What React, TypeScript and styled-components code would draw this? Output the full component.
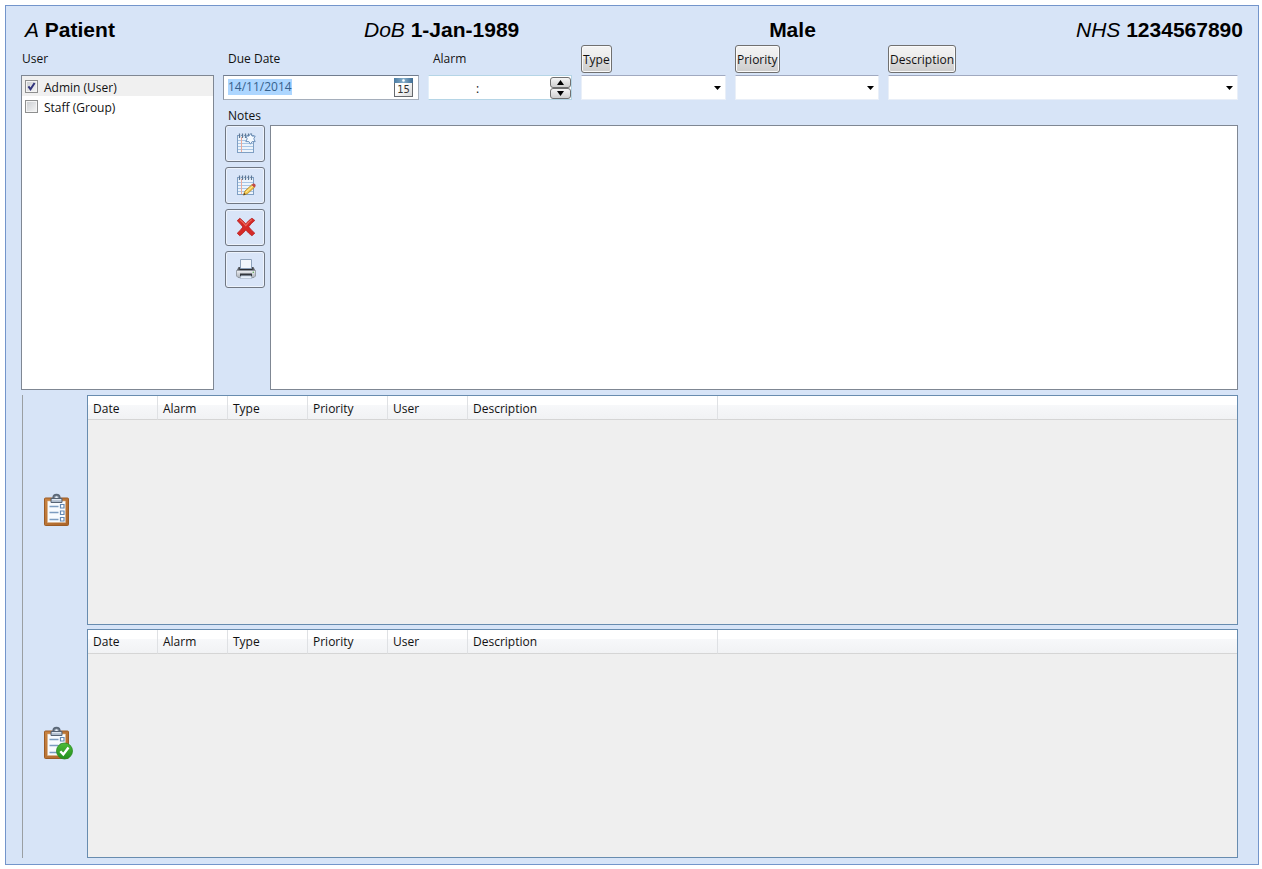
import React, { useEffect, useRef, useState } from "react";
import styled, { createGlobalStyle } from "styled-components";

const GlobalStyle = createGlobalStyle`
  *, *::before, *::after { box-sizing: border-box; }
  body {
    margin: 0;
    background: #fff;
    color: #111;
    font-family: "Open Sans", "Noto Sans", sans-serif;
    font-size: 12px;
    line-height: 16px;
  }
  button, input, select, textarea { font: inherit; color: inherit; margin: 0; }
`;

const Page = styled.div`
  display: flex;
  min-height: 100vh;
  padding: 5px 3px 4px 5px;
`;

const Frame = styled.main`
  flex: 1;
  min-width: 0;
  display: flex;
  flex-direction: column;
  padding: 0 20px 6px 15px;
  background: #d7e4f7;
  border: 1px solid #7395cb;
`;

const PatientBar = styled.header`
  display: grid;
  grid-template-columns: 338fr 404fr 306fr auto;
  margin-right: -5px;
  padding: 11px 0 2px 4px;
  font-family: "Liberation Sans", Arial, sans-serif;
  font-size: 21px;
  line-height: 26px;
  color: #000;
  white-space: nowrap;
`;

const Editor = styled.form`
  display: grid;
  grid-template-columns: 193px minmax(0, 1fr);
  gap: 9px;
`;

const UserPanel = styled.section`
  display: flex;
  flex-direction: column;
  gap: 2px;
`;

const CaptionRow = styled.div<{ $indent?: number }>`
  display: flex;
  align-items: center;
  height: 28px;
  padding-left: ${(p) => p.$indent ?? 0}px;
`;

const UserList = styled.ul`
  flex: 1;
  margin: 0;
  padding: 0;
  list-style: none;
  background: #fff;
  border: 1px solid #7f8793;
`;

const UserRow = styled.li<{ $selected?: boolean }>`
  height: 20px;
  background: ${(p) => (p.$selected ? "#f0f0f0" : "transparent")};

  label {
    display: flex;
    align-items: flex-start;
    gap: 6px;
    padding: 4px 0 0 3px;
  }
`;

const TickWrap = styled.span`
  position: relative;
  width: 13px;
  height: 13px;

  svg {
    position: absolute;
    inset: 0;
    pointer-events: none;
  }
`;

const Tick = styled.input`
  appearance: none;
  display: block;
  width: 13px;
  height: 13px;
  border: 1px solid #8e8f8f;
  background: linear-gradient(135deg, #c9ccd0, #f6f6f6);
  box-shadow: inset 0 0 0 1px #f4f4f4;
`;

const DetailPanel = styled.section`
  display: flex;
  flex-direction: column;
  min-width: 0;
`;

const FieldRow = styled.div`
  display: grid;
  grid-template-columns: 196px 144px 145px 144px minmax(0, 1fr);
  column-gap: 9px;
`;

const Field = styled.div`
  display: flex;
  flex-direction: column;
  gap: 2px;
  min-width: 0;
`;

const CaptionButton = styled.button`
  height: 28px;
  padding: 2px 1px 0;
  border: 1px solid #707070;
  border-radius: 3px;
  background: linear-gradient(#f3f3f3 0%, #ebebeb 50%, #dddddd 51%, #cdcdcd 100%);
  box-shadow: inset 0 0 0 1px #fafafa;
`;

const DateBox = styled.div`
  display: flex;
  align-items: center;
  height: 25px;
  padding: 0 5px 0 4px;
  background: #fff;
  border: 1px solid #a5aebb;
  border-top-color: #717d8f;
  border-left-color: #8a94a3;
`;

const DateInput = styled.input`
  flex: 1;
  min-width: 0;
  height: 16px;
  margin-bottom: 2px;
  padding: 0;
  border: 0;
  outline: 0;
  background: transparent;
  color: #36618c;

  &::selection { background: #add6ff; color: #36618c; }
`;

const BareButton = styled.button`
  display: block;
  padding: 0;
  border: 0;
  background: none;

  svg { display: block; }
`;

const TimeBox = styled.div`
  display: flex;
  align-items: center;
  height: 25px;
  background: #fff;
  border: 1px solid #b5d5e6;
  border-left-color: #e2effa;
`;

const TimeInput = styled.input`
  flex: 1;
  min-width: 0;
  height: 20px;
  padding: 2px 24px 0 0;
  border: 0;
  outline: 0;
  background: transparent;
  text-align: center;
`;

const Spinner = styled.div`
  display: flex;
  flex-direction: column;
`;

const SpinButton = styled.button`
  display: flex;
  align-items: center;
  justify-content: center;
  width: 21px;
  height: 11px;
  padding: 0;
  border: 1px solid #707070;
  border-radius: 3px;
  background: linear-gradient(#f6f6f6, #cfcfcf);
`;

const ComboBox = styled.div`
  position: relative;
  height: 25px;

  svg {
    position: absolute;
    right: 5px;
    top: 11px;
    pointer-events: none;
  }
`;

const Combo = styled.select`
  appearance: none;
  display: block;
  width: 100%;
  height: 25px;
  padding: 0 20px 0 4px;
  border: 1px solid #e9eff8;
  border-top-color: #a0a9c0;
  border-radius: 0;
  background: #fff;
`;

const NotesLabel = styled.label`
  margin: 8px 0 1px 5px;
`;

const NotesRow = styled.div`
  display: flex;
  gap: 5px;
  padding-left: 2px;
`;

const ToolColumn = styled.div`
  display: flex;
  flex-direction: column;
  gap: 5px;
`;

const ToolButton = styled.button`
  display: flex;
  align-items: center;
  justify-content: center;
  width: 40px;
  height: 37px;
  padding: 0 0 2px 2px;
  border: 1px solid #707782;
  border-radius: 3px;
  background: #d9e5f8;
  box-shadow: inset 0 0 0 1px #edf3fc;
`;

const NotesBox = styled.textarea`
  flex: 1;
  min-width: 0;
  height: 265px;
  padding: 4px;
  resize: none;
  outline: 0;
  border: 1px solid #7f8793;
  border-radius: 0;
  background: #fff;
`;

const TaskArea = styled.section`
  flex: 1;
  display: flex;
  flex-direction: column;
  gap: 4px;
  margin: 5px 0 0 1px;
  border-left: 1px solid #9a9fa3;
`;

const TaskGroup = styled.div`
  flex: 1;
  display: grid;
  grid-template-columns: 64px minmax(0, 1fr);
  min-height: 120px;
`;

const SideIcon = styled.div`
  display: flex;
  align-items: center;
  justify-content: center;
  padding-left: 4px;
`;

const GridPanel = styled.div`
  background: #efefef;
  border: 1px solid #688caf;
`;

const GridTable = styled.table`
  width: 100%;
  table-layout: fixed;
  border-collapse: separate;
  border-spacing: 0;
`;

const HeadCell = styled.th<{ $width?: number }>`
  width: ${(p) => (p.$width ? `${p.$width}px` : "auto")};
  height: 24px;
  padding: 2px 5px 0;
  text-align: left;
  font-weight: 400;
  background: linear-gradient(#ffffff 0%, #ffffff 40%, #f7f8fa 41%, #f1f2f4 100%);
  border-bottom: 1px solid #d5d5d5;
  border-right: ${(p) => (p.$width ? "1px solid #dfe1e4" : "0")};
`;

const CheckMark = () => (
  <svg width="13" height="13" viewBox="0 0 13 13">
    <path d="M3.4 6.4 L5.5 9.3 L9.6 3" fill="none" stroke="#31347c" strokeWidth="2" />
  </svg>
);

const DownArrow = () => (
  <svg width="7" height="4" viewBox="0 0 7 4">
    <path d="M0 0H7L3.5 4Z" fill="#000" />
  </svg>
);

const SpinArrow = ({ up }: { up?: boolean }) => (
  <svg width="7" height="5" viewBox="0 0 7 5">
    <path d={up ? "M0 5H7L3.5 0Z" : "M0 0H7L3.5 5Z"} fill="#000" />
  </svg>
);

const CalendarIcon = () => (
  <svg width="19" height="19" viewBox="0 0 19 19">
    <defs>
      <linearGradient id="calTop" x1="0" x2="1">
        <stop offset="0" stopColor="#4c7ba1" />
        <stop offset="0.5" stopColor="#83adca" />
        <stop offset="1" stopColor="#3f6c93" />
      </linearGradient>
      <linearGradient id="calPage" x1="0" x2="1" y1="0" y2="1">
        <stop offset="0.4" stopColor="#fff" />
        <stop offset="1" stopColor="#d8d8d8" />
      </linearGradient>
    </defs>
    <rect x="0.5" y="0.5" width="18" height="18" fill="url(#calPage)" stroke="#66696d" />
    <rect x="0" y="0" width="19" height="5" fill="url(#calTop)" />
    <circle cx="9.5" cy="2.5" r="1.3" fill="#fff" />
    <text x="9.5" y="15" textAnchor="middle" fontFamily="DejaVu Sans" fontSize="10" fill="#333">15</text>
  </svg>
);

const NotePad = () => (
  <>
    <rect x="2.5" y="3.5" width="16" height="17" fill="#edf4fc" stroke="#7f9fc3" />
    <path d="M3 8.5H18M3 11.5H18M3 14.5H18M3 17.5H18" stroke="#a9c5e4" />
    <path d="M6.5 5V20" stroke="#e9a99a" />
    <path d="M4.5 1.5V6M7.5 1.5V6M10.5 1.5V6M13.5 1.5V6M16.5 1.5V6" stroke="#5f7896" strokeWidth="1.2" />
    <path d="M5.5 2.5V5M8.5 2.5V5M11.5 2.5V5M14.5 2.5V5" stroke="#c3d0df" />
  </>
);

const NewNoteIcon = () => (
  <svg width="22" height="22" viewBox="0 0 22 22">
    <NotePad />
    <path
      d="M15.5 1.6 L17.1 4.1 L20.2 4 L18.8 6.8 L20.2 9.6 L17.1 9.6 L15.5 12.2 L13.9 9.6 L10.8 9.6 L12.2 6.8 L10.8 4 L13.9 4.1Z"
      fill="#f4f9ff"
      stroke="#6f92bb"
    />
  </svg>
);

const EditNoteIcon = () => (
  <svg width="22" height="22" viewBox="0 0 22 22">
    <NotePad />
    <path d="M8.5 21 L9.8 17.2 L17.2 10.4 L19.8 13 L12.3 19.8Z" fill="#f4c84b" stroke="#b08428" strokeWidth="0.8" />
    <path d="M10.7 18.4 L18.4 11.6" stroke="#fff0a8" strokeWidth="1" />
    <path d="M16.6 11 L18.1 9.6 Q19 9 20 10 T20.4 12.2 L19.2 13.6Z" fill="#c04a48" />
    <path d="M8.3 21.2 L9.2 18.8 L10.7 20.4Z" fill="#584329" />
  </svg>
);

const DeleteIcon = () => (
  <svg width="22" height="22" viewBox="0 0 20 20">
    <path
      d="M2 4.3 L4.4 2 Q7 4 9.8 7.2 Q12.6 3.6 15.4 2 L18 4 Q14.8 6.5 12.4 9.8 Q15 13.2 18 15.6 L15.4 18 Q12.5 16 9.8 12.7 Q7.2 16.2 4.4 18 L2 15.7 Q5 13.2 7.2 10 Q4.8 6.8 2 4.3Z"
      fill="#d62a27"
      stroke="#b51c1f"
      strokeWidth="0.7"
    />
    <path d="M4.4 3.4 Q7.4 5.6 9.8 8.8 Q12.4 5.2 15.4 3.3" fill="none" stroke="#ea6a5c" />
  </svg>
);

const PrinterIcon = () => (
  <svg width="20" height="20" viewBox="0 0 20 20">
    <defs>
      <linearGradient id="printerBody" x1="0" x2="0" y1="0" y2="1">
        <stop offset="0" stopColor="#f0f2f5" />
        <stop offset="1" stopColor="#a9afb7" />
      </linearGradient>
    </defs>
    <path d="M2.5 8H17.5L19.5 12H0.5Z" fill="#5c6067" />
    <path d="M3.5 8.5H16.5V11H3.5Z" fill="#2a2d33" />
    <path d="M4.5 0.5H15.5V9.5H4.5Z" fill="#f2f7fd" stroke="#8ea2bb" />
    <path d="M0.5 11.5H19.5V17L18 18.5H2L0.5 17Z" fill="url(#printerBody)" stroke="#8a9097" strokeWidth="0.8" />
    <path d="M4 14.5H16V17.5H4Z" fill="#33373d" />
    <path d="M5 16.8H15L16 19.6H4Z" fill="#e7f0fa" stroke="#9cacbf" strokeWidth="0.6" />
    <circle cx="17.3" cy="13.3" r="0.8" fill="#5faa55" />
  </svg>
);

const ClipboardIcon = ({ done }: { done?: boolean }) => (
  <svg width="32" height="36" viewBox="0 0 32 36">
    <defs>
      <linearGradient id="board" x1="0" x2="1" y1="0" y2="1">
        <stop offset="0" stopColor="#c98342" />
        <stop offset="1" stopColor="#aa6429" />
      </linearGradient>
      <linearGradient id="okDisc" x1="0" x2="0" y1="0" y2="1">
        <stop offset="0" stopColor="#4dbb39" />
        <stop offset="1" stopColor="#238f1d" />
      </linearGradient>
    </defs>
    <rect x="3.5" y="6" width="24" height="27.5" rx="1" fill="url(#board)" stroke="#9b5b25" />
    <path d="M6.5 9H24.5V30.5H6.5Z" fill="#f7fbff" stroke="#dcb58d" strokeWidth="0.6" />
    <path d="M8.5 14.5H17.5M8.5 20.5H17.5M8.5 27.5H17.5" stroke="#7b9cc0" strokeWidth="1.4" />
    <path d="M19.5 12.5H23V16H19.5ZM19.5 19H23V22.5H19.5ZM19.5 25.5H23V29H19.5Z" fill="#fff" stroke="#6489b4" strokeWidth="1.2" />
    <path d="M12.2 7V5.6A3.3 3 0 0 1 18.8 5.6V7" fill="#8592a2" stroke="#5b6878" strokeWidth="1.6" />
    <circle cx="15.5" cy="5.4" r="1.2" fill="#e6edf6" />
    <path d="M10 6.5H21V10.5H10Z" fill="#aebccc" stroke="#566374" />
    <path d="M11 7.7H20" stroke="#e8eff7" />
    {done && (
      <>
        <circle cx="23.5" cy="26" r="8" fill="url(#okDisc)" stroke="#2b8c22" strokeWidth="0.8" />
        <path d="M19.3 26.2 L22.3 29.4 L27.5 22.6" fill="none" stroke="#fff" strokeWidth="2.4" />
      </>
    )}
  </svg>
);

const columns = [
  { title: "Date", width: 70 },
  { title: "Alarm", width: 70 },
  { title: "Type", width: 80 },
  { title: "Priority", width: 80 },
  { title: "User", width: 80 },
  { title: "Description", width: 250 },
];

const TaskTable = ({ label }: { label: string }) => (
  <GridPanel>
    <GridTable aria-label={label}>
      <thead>
        <tr>
          {columns.map((c) => (
            <HeadCell key={c.title} $width={c.width} scope="col">
              {c.title}
            </HeadCell>
          ))}
          <HeadCell as="td" />
        </tr>
      </thead>
      <tbody />
    </GridTable>
  </GridPanel>
);

const UserOption = ({ name, initial }: { name: string; initial?: boolean }) => {
  const [checked, setChecked] = useState(Boolean(initial));
  return (
    <UserRow $selected={initial}>
      <label>
        <TickWrap>
          <Tick type="checkbox" checked={checked} onChange={(e) => setChecked(e.target.checked)} />
          {checked && <CheckMark />}
        </TickWrap>
        {name}
      </label>
    </UserRow>
  );
};

const LookupField = ({ caption }: { caption: string }) => (
  <Field>
    <CaptionRow>
      <CaptionButton type="button">{caption}</CaptionButton>
    </CaptionRow>
    <ComboBox>
      <Combo aria-label={caption} />
      <DownArrow />
    </ComboBox>
  </Field>
);

export default function App() {
  const dueDate = useRef<HTMLInputElement>(null);

  useEffect(() => {
    dueDate.current?.focus();
    dueDate.current?.select();
  }, []);

  return (
    <>
      <GlobalStyle />
      <Page>
        <Frame>
          <PatientBar>
            <span><i>A</i> <b>Patient</b></span>
            <span><i>DoB</i> <b>1-Jan-1989</b></span>
            <b>Male</b>
            <span><i>NHS</i> <b>1234567890</b></span>
          </PatientBar>

          <Editor onSubmit={(e) => e.preventDefault()}>
            <UserPanel>
              <CaptionRow $indent={1}>User</CaptionRow>
              <UserList>
                <UserOption name="Admin (User)" initial />
                <UserOption name="Staff (Group)" />
              </UserList>
            </UserPanel>

            <DetailPanel>
              <FieldRow>
                <Field>
                  <CaptionRow $indent={5}>
                    <label htmlFor="due">Due Date</label>
                  </CaptionRow>
                  <DateBox>
                    <DateInput id="due" ref={dueDate} defaultValue="14/11/2014" />
                    <BareButton type="button" aria-label="Open calendar">
                      <CalendarIcon />
                    </BareButton>
                  </DateBox>
                </Field>
                <Field>
                  <CaptionRow $indent={5}>
                    <label htmlFor="alarm">Alarm</label>
                  </CaptionRow>
                  <TimeBox>
                    <TimeInput id="alarm" defaultValue=":" />
                    <Spinner>
                      <SpinButton type="button" aria-label="Later"><SpinArrow up /></SpinButton>
                      <SpinButton type="button" aria-label="Earlier"><SpinArrow /></SpinButton>
                    </Spinner>
                  </TimeBox>
                </Field>
                <LookupField caption="Type" />
                <LookupField caption="Priority" />
                <LookupField caption="Description" />
              </FieldRow>

              <NotesLabel htmlFor="notes">Notes</NotesLabel>
              <NotesRow>
                <ToolColumn>
                  <ToolButton type="button" aria-label="New note"><NewNoteIcon /></ToolButton>
                  <ToolButton type="button" aria-label="Edit note"><EditNoteIcon /></ToolButton>
                  <ToolButton type="button" aria-label="Delete note"><DeleteIcon /></ToolButton>
                  <ToolButton type="button" aria-label="Print"><PrinterIcon /></ToolButton>
                </ToolColumn>
                <NotesBox id="notes" />
              </NotesRow>
            </DetailPanel>
          </Editor>

          <TaskArea>
            <TaskGroup>
              <SideIcon><ClipboardIcon /></SideIcon>
              <TaskTable label="Outstanding tasks" />
            </TaskGroup>
            <TaskGroup>
              <SideIcon><ClipboardIcon done /></SideIcon>
              <TaskTable label="Completed tasks" />
            </TaskGroup>
          </TaskArea>
        </Frame>
      </Page>
    </>
  );
}
